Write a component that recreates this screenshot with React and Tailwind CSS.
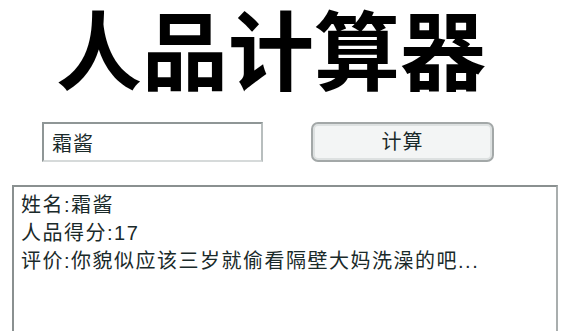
import React, { useState } from 'react';

const App = () => {
  const [name, setName] = useState('霜酱');

  return (
    <div
      className="w-[574px] h-[331px] overflow-hidden bg-white"
      style={{ fontFamily: '"Liberation Sans", "Noto Sans CJK SC", sans-serif' }}
    >
      {/* Title */}
      <h1 className="pl-[56px] pt-[6px] h-[116px] text-[86px] leading-[96px] font-bold text-black tracking-[0px]">
        人品计算器
      </h1>

      {/* Input row */}
      <div className="flex items-center h-[52px] pl-[42px]">
        <input
          value={name}
          onChange={(e) => setName(e.target.value)}
          className="w-[221px] h-[40px] px-[8px] text-[20px] tracking-[1px] text-[#1a2a2a] bg-white border-2 border-t-[#8f9696] border-l-[#8f9696] border-b-[#d6dada] border-r-[#b8bebe] outline-none"
        />
        <button className="ml-[48px] w-[183px] h-[40px] rounded-[7px] border-2 border-[#a3a8a8] bg-[#f3f5f5] shadow-[inset_0_0_0_2px_#dde1e1] text-[20px] tracking-[1px] text-[#1a2a2a]">
          计算
        </button>
      </div>

      {/* Result box */}
      <div className="mt-[17px] ml-[12px] w-[546px] h-[200px] border-2 border-t-[#8a9090] border-l-[#8a9090] border-r-[#a9aeae] border-b-[#a9aeae] px-[7px] pt-[4px] text-[20px] leading-[28px] tracking-[1.5px] text-[#1a2a2a]">
        <p>姓名:霜酱</p>
        <p>人品得分:17</p>
        <p>评价:你貌似应该三岁就偷看隔壁大妈洗澡的吧...</p>
      </div>
    </div>
  );
};

export default App;
